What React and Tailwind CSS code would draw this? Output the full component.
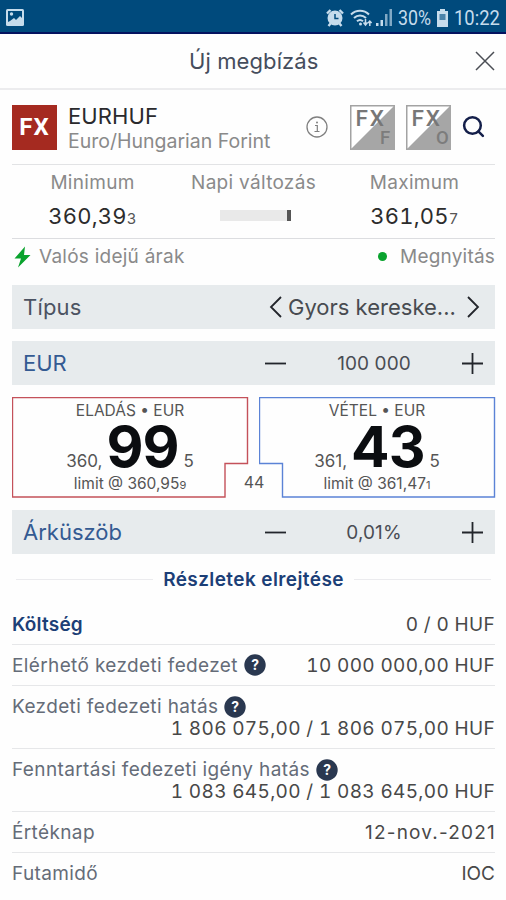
import React from 'react';
import { Search } from 'lucide-react';

export default function NewOrder() {
  return (
    <div className="w-[506px] h-[900px] bg-[#fefefe] font-['Inter',sans-serif] font-normal overflow-hidden flex flex-col">
      <StatusBar />

      {/* Header */}
      <div className="h-14 shrink-0 border-b-2 border-[#ececee] pl-[189px] pr-[11px] flex items-center justify-between">
        <h1 className="text-[22px] leading-none tracking-[0.1px] text-[#454d5c]">Új megbízás</h1>
        <svg width="20" height="20" viewBox="0 0 20 20" stroke="#4a4d54" strokeWidth="1.500">
          <path d="M1 1l18 18M19 1L1 19" />
        </svg>
      </div>

      <div className="pl-3 pr-[11px] flex flex-col">
        <Instrument />
        <DailyRange />

        {/* Market state */}
        <div className="h-[35px] flex items-center justify-between text-[19px] leading-none text-[#8a8a8a]">
          <div className="flex items-center">
            <svg width="21" height="24" viewBox="0 0 21 24" className="mr-[6px]">
              <path d="M13 1.500 2.500 13.500h6.500L6 22.500 18.500 10h-6.500z" fill="#0aa32e" />
            </svg>
            <span className="tracking-[0.25px]">Valós idejű árak</span>
          </div>
          <div className="flex items-center gap-[13px]">
            <span className="w-[9px] h-[9px] rounded-full bg-[#0aa32e]" />
            <span className="tracking-[0.2px]">Megnyitás</span>
          </div>
        </div>

        {/* Order type */}
        <div className="mt-[11px] h-11 bg-[#e7ebed] pl-[11px] pr-[15px] flex items-center justify-between text-[22px] leading-none">
          <span className="text-[#4c5362] tracking-[0.2px]">Típus</span>
          <div className="flex items-center text-[#22252b]">
            <Chevron points="12,2 2,12 12,22" />
            <span className="ml-[5px] w-[178px] text-[#484b51] whitespace-nowrap">Gyors kereske...</span>
            <Chevron points="2,2 12,12 2,22" />
          </div>
        </div>

        <Stepper label="EUR" value="100 000" />

        {/* Quotes */}
        <div className="mt-3 mb-3 h-[101px] relative flex justify-between">
          <Quote
            title="ELADÁS • EUR" lead="360," big="99" limit="360,95" pip="9"
            outline="0.5,0.5 235.500,0.5 235.500,66.500 213,66.500 213,100 0.5,100" color="#c4515a"
          />
          <Quote
            title="VÉTEL • EUR" lead="361," big="43" limit="361,47" pip="1"
            outline="0.5,0.5 235.500,0.5 235.500,100 23.500,100 23.500,66.500 0.5,66.500" color="#5b83d6"
          />
          <span className="absolute left-[213px] top-[77px] w-[58px] text-center text-[16px] leading-none text-[#555]">44</span>
        </div>

        <Stepper label="Árküszöb" value="0,01%" flush />

        {/* Details toggle */}
        <div className="h-[51px] px-1 flex items-center gap-2.5">
          <span className="h-px flex-1 bg-[#ebebee]" />
          <span className="text-[19px] leading-none font-semibold tracking-[0.4px] text-[#1c3f77]">Részletek elrejtése</span>
          <span className="h-px flex-1 bg-[#ebebee]" />
        </div>

        {/* Details */}
        <div className="h-10 border-b border-[#e6e7e9] flex items-center justify-between text-[19px] leading-none">
          <span className="font-semibold tracking-[0.2px] text-[#1c3f77]">Költség</span>
          <Value text="0 / 0 HUF" />
        </div>
        <div className="h-[41px] border-b border-[#e6e7e9] flex items-center justify-between text-[19px] leading-none">
          <Label text="Elérhető kezdeti fedezet" help />
          <Value text="10 000 000,00 HUF" />
        </div>
        <TwoLine label="Kezdeti fedezeti hatás" value="1 806 075,00 / 1 806 075,00 HUF" />
        <TwoLine label="Fenntartási fedezeti igény hatás" value="1 083 645,00 / 1 083 645,00 HUF" />
        <div className="h-[41px] border-b border-[#e6e7e9] flex items-center justify-between text-[19px] leading-none">
          <Label text="Értéknap" />
          <span className="text-[#484848] tracking-[1.2px] -mr-px">12-nov.-2021</span>
        </div>
        <div className="h-10 flex items-center justify-between text-[19px] leading-none">
          <Label text="Futamidő" />
          <span className="text-[#484848]">IOC</span>
        </div>
      </div>
    </div>
  );
}

function StatusBar() {
  return (
    <div className="h-[34px] shrink-0 bg-[#004a7c] border-b-2 border-[#04125f] pl-1.5 pr-[6px] flex items-center justify-between text-[#c6dcec]">
      <svg width="18" height="17" viewBox="0 0 18 17" className="mt-[2px]">
        <rect width="18" height="17" rx="1.500" fill="currentColor" />
        <path d="M2 2h14v7l-2-2-4 4-2-2-4 3-2 1z" fill="#004a7c" />
        <circle cx="5.500" cy="5" r="1.700" fill="currentColor" />
      </svg>
      <div className="mt-[3px] flex items-center">
        {/* alarm */}
        <svg width="18" height="18" viewBox="0 0 18 18" className="-mr-px">
          <path d="M1 4.500 4.500 1M17 4.500l-3.500-3.500M2.500 17l2.500-3M15.500 17l-2.500-3" stroke="currentColor" strokeWidth="2.400" />
          <circle cx="9" cy="9" r="7.500" fill="currentColor" />
          <path d="M9 5v4.500h3.500" stroke="#004a7c" strokeWidth="1.500" fill="none" />
        </svg>
        {/* wifi */}
        <svg width="23" height="18" viewBox="0 0 23 18" className="ml-[7px]" fill="none" stroke="currentColor" strokeWidth="2">
          <path d="M1 5.500C6 .5 14 .5 19 5.500M4 9c3.500-3.500 8.500-3.500 12 0M7 12.300c2-1.800 4-1.800 6 0" />
          <circle cx="10.500" cy="15" r="1.500" fill="currentColor" stroke="none" />
          <path d="M15.500 10v6M13.500 13.500l2 2.500 2-2.500M19.800 17v-5M18 14l1.800-2 1.800 2" strokeWidth="1.500" />
        </svg>
        {/* signal */}
        <svg width="17" height="17" viewBox="0 0 17 17" className="ml-[3px]">
          <path d="M0 17v-3h2.500v3zM4.500 17v-6H7v6z" fill="currentColor" />
          <path d="M9 17V5h2.500v12zM13.500 17V0H16v17z" fill="currentColor" opacity="0.65" />
        </svg>
        <span className="ml-[5px] w-[34px] font-['Roboto',sans-serif] text-[20px] leading-none whitespace-nowrap">
          <span className="inline-block origin-left scale-x-[0.89]">30%</span>
        </span>
        <svg width="11" height="18" viewBox="0 0 11 18" className="ml-[5px]">
          <path d="M3 0h5v2h3v16H0V2h3z" fill="currentColor" />
          <path d="M2.500 5h6v6h-6z" fill="#4a83aa" />
        </svg>
        <span className="ml-[6px] w-[46px] font-['Roboto',sans-serif] text-[20px] leading-none whitespace-nowrap">
          <span className="inline-block origin-left scale-x-[0.92]">10:22</span>
        </span>
      </div>
    </div>
  );
}

function Instrument() {
  return (
    <div className="h-[75px] border-b border-[#e2e3e5] flex items-center justify-between">
      <div className="flex items-center">
        <div className="w-[45px] h-[45px] bg-[#a52a20] flex items-center justify-center text-white text-[24px] leading-none font-['Roboto',sans-serif] font-bold tracking-[1px]">
          FX
        </div>
        <div className="ml-[11px] mt-[3px] flex flex-col">
          <span className="text-[22px] leading-[25px] tracking-[0.1px] text-[#2a2a2d]">EURHUF</span>
          <span className="text-[19.5px] leading-[25px] text-[#8a8a8a]">Euro/Hungarian Forint</span>
        </div>
      </div>
      <div className="flex items-center">
        <svg width="22" height="22" viewBox="0 0 22 22" className="mr-[22px]" fill="none" stroke="#808080">
          <circle cx="11" cy="11" r="10" strokeWidth="1.300" />
          <path d="M9 9.500h2.300v6M8.500 15.500h5" strokeWidth="1.200" />
          <circle cx="11" cy="6.500" r="1" fill="#808080" stroke="none" />
        </svg>
        <FxTile letter="F" />
        <FxTile letter="O" />
        <Search size={25} strokeWidth={2.4} className="-ml-px mr-[9px] mb-px text-[#141f4a]" />
      </div>
    </div>
  );
}

// Related product tile: FX over a grey diagonal half
function FxTile({ letter }) {
  return (
    <svg width="45" height="45" viewBox="0 0 45 45" className="mr-[11px]">
      <rect x="0.750" y="0.750" width="43.500" height="43.500" fill="#fff" stroke="#a3a3a3" strokeWidth="1.500" />
      <path d="M45 0v45H0z" fill="#a6a6a6" />
      <text x="5.500" y="20.500" fontFamily="Roboto" fontSize="22.500" fontWeight="500" letterSpacing="1.800" fill="#777">FX</text>
      <text x="30" y="39" fontFamily="Roboto" fontSize="18.500" fontWeight="500" fill="#7c7c7c">{letter}</text>
    </svg>
  );
}

function DailyRange() {
  return (
    <div className="h-[74px] border-b border-[#dcdde0] grid grid-cols-3 text-center">
      <div className="flex flex-col">
        <span className="mt-[6px] text-[19px] leading-6 tracking-[0.3px] text-[#8a8a8a]">Minimum</span>
        <Price main="360,39" pip="3" />
      </div>
      <div className="flex flex-col items-center">
        <span className="mt-[6px] text-[19px] leading-6 tracking-[0.3px] text-[#8a8a8a]">Napi változás</span>
        <div className="mt-[15px] ml-[3px] w-[71px] h-[11px] bg-[#e9e9e9] flex justify-end">
          <span className="w-1 h-full bg-[#555]" />
        </div>
      </div>
      <div className="flex flex-col">
        <span className="mt-[6px] text-[19px] leading-6 tracking-[0.3px] text-[#8a8a8a]">Maximum</span>
        <Price main="361,05" pip="7" />
      </div>
    </div>
  );
}

function Price({ main, pip }) {
  return (
    <span className="mt-[9px] text-[22px] leading-6 tracking-[0.2px] tabular-nums text-[#2c2c2c]">
      {main}<span className="text-[15px] text-[#555]">{pip}</span>
    </span>
  );
}

function Chevron({ points }) {
  return (
    <svg width="14" height="24" viewBox="0 0 14 24" fill="none" stroke="currentColor" strokeWidth="1.800">
      <polyline points={points} />
    </svg>
  );
}

function Stepper({ label, value, flush }) {
  return (
    <div className={`h-11 bg-[#e7ebed] pl-[11px] pr-3 flex items-center justify-between text-[22px] leading-none ${flush ? '' : 'mt-3'}`}>
      <span className="text-[#345a92]">{label}</span>
      <div className="w-[218px] flex items-center justify-between text-[#22252b]">
        <svg width="21" height="21" viewBox="0 0 21 21" stroke="currentColor" strokeWidth="1.800">
          <path d="M0 10.500h21" />
        </svg>
        <span className="text-[19px] tracking-[0.1px] text-[#4a4d54]">{value}</span>
        <svg width="21" height="21" viewBox="0 0 21 21" stroke="currentColor" strokeWidth="1.800">
          <path d="M0 10.500h21M10.500 0v21" />
        </svg>
      </div>
    </div>
  );
}

function Quote({ title, lead, big, limit, pip, outline, color }) {
  return (
    <div className="relative w-[236px] h-full flex flex-col items-center text-[#555]">
      <svg className="absolute inset-0" width="237" height="101" viewBox="0 0 237 101" fill="none">
        <polygon points={outline} stroke={color} strokeWidth="1.400" />
      </svg>
      <span className="mt-[5px] text-[15.5px] leading-[17px]">{title}</span>
      <div className="h-[56px] flex items-baseline leading-[56px]">
        <span className="text-[17px]">{lead}</span>
        <span className="ml-1 text-[57px] font-bold tracking-[-1px] text-[#0b0d10]">{big}</span>
        <span className="ml-[5px] text-[17px]">5</span>
      </div>
      <span className="text-[15.5px] leading-[17px]">limit @ {limit}<span className="text-[11px]">{pip}</span></span>
    </div>
  );
}

function Label({ text, help }) {
  return (
    <span className="flex items-center text-[#656c78] tracking-[0.37px]">
      {text}
      {help && (
        <svg width="22" height="22" viewBox="0 0 22 22" className="ml-[6px]">
          <circle cx="11" cy="11" r="10.700" fill="#2a3850" />
          <text x="11.200" y="16" textAnchor="middle" fontFamily="Inter" fontSize="14" fontWeight="700" letterSpacing="0" fill="#fff">?</text>
        </svg>
      )}
    </span>
  );
}

function Value({ text }) {
  return <span className="text-[#484848] tracking-[0.33px] tabular-nums">{text}</span>;
}

function TwoLine({ label, value }) {
  return (
    <div className="h-[63px] border-b border-[#e6e7e9] pt-[10px] flex flex-col items-start text-[19px] leading-[22px]">
      <Label text={label} help />
      <span className="self-end">
        <Value text={value} />
      </span>
    </div>
  );
}
